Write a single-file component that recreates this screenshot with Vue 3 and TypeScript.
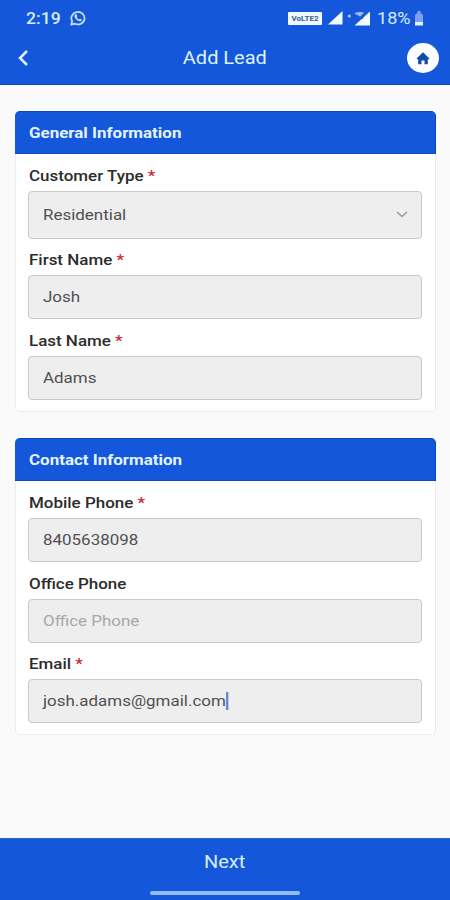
<script setup lang="ts">
interface Field {
  label: string
  value: string
  required?: boolean
  kind?: 'select' | 'focused' | 'empty'
}
interface Section {
  id: string
  title: string
  fields: Field[]
}

const sections: Section[] = [
  {
    id: 'general',
    title: 'General Information',
    fields: [
      { label: 'Customer Type', value: 'Residential', required: true, kind: 'select' },
      { label: 'First Name', value: 'Josh', required: true },
      { label: 'Last Name', value: 'Adams', required: true },
    ],
  },
  {
    id: 'contact',
    title: 'Contact Information',
    fields: [
      { label: 'Mobile Phone', value: '8405638098', required: true },
      { label: 'Office Phone', value: 'Office Phone', kind: 'empty' },
      { label: 'Email', value: 'josh.adams@gmail.com', required: true, kind: 'focused' },
    ],
  },
]
</script>

<template>
  <div class="screen">
    <header class="top">
      <div class="status">
        <span class="clock wide">2:19</span>
        <svg class="whatsapp" viewBox="0 0 18 16" preserveAspectRatio="none">
          <path d="M2.2 14.6 3.2 11.2A6.6 6.2 0 1 1 6 13.7Z" fill="none" stroke="#c4e3ff" stroke-width="1.7" stroke-linejoin="round" />
          <path d="M6.6 4.2 7.7 4.5 8.3 6.3 7.6 7.1C8.2 8.3 9 9 10.1 9.5L11 8.7 12.8 9.6C12.8 11 11.6 11.6 10.5 11.3 8 10.7 6 8.7 5.5 6.5 5.4 5.4 5.8 4.5 6.6 4.2Z" fill="#c4e3ff" />
        </svg>
        <span class="grow"></span>
        <span class="volte"><span>VoLTE2</span></span>
        <svg class="signal" viewBox="0 0 15 14"><path d="M14.5 0V13.5H0Z" fill="#f2fbff" /></svg>
        <svg class="signal2" viewBox="0 0 24 15">
          <circle cx="2.3" cy="5" r="1.6" fill="#a9caff" />
          <path d="M23 .5V14.5H7.5Z" fill="#f2fbff" />
          <path d="M7.5 2.3Q12 0 17 1.5L12.5 6.5Z" fill="#9fbeee" />
          <path d="M9 4 16 7.5" stroke="#1557db" stroke-width="1.3" />
        </svg>
        <span class="battery-text wide">18%</span>
        <svg class="battery" viewBox="0 0 10 15">
          <path d="M3.4 0H6.6V1.7L9 4V11H1V4L3.4 1.7Z" fill="#7f9ff4" />
          <path d="M1 11H9V14.5H1Z" fill="#e7f2ff" />
        </svg>
      </div>
      <div class="nav">
        <button class="back" aria-label="Back">
          <svg viewBox="0 0 12 18"><path d="M10 2 3 9 10 16" fill="none" stroke="#dff3ff" stroke-width="2.5" /></svg>
        </button>
        <h1><span class="wide">Add Lead</span></h1>
        <button class="home" aria-label="Home">
          <svg viewBox="0 0 14 13"><path d="M7 .3 13.4 6.6 12.8 7.2H11.8V12.2H8.5V8.6H5.5V12.2H2.2V7.2H1.2L.6 6.6Z" fill="#124aa9" /></svg>
        </button>
      </div>
    </header>

    <main>
      <section v-for="s in sections" :key="s.id" class="card" :class="s.id">
        <h2><span class="wide">{{ s.title }}</span></h2>
        <div class="fields">
          <div v-for="f in s.fields" :key="f.label" class="field">
            <div class="label"><span class="wide">{{ f.label }}<i v-if="f.required"> *</i></span></div>
            <div class="box" :class="f.kind">
              <span class="wide">{{ f.value }}<b v-if="f.kind === 'focused'" class="caret"></b></span>
              <svg v-if="f.kind === 'select'" class="chevron" viewBox="0 0 12 7"><path d="M1 1 6 5.5 11 1" fill="none" stroke="#9a9a9a" stroke-width="1.5" /></svg>
            </div>
          </div>
        </div>
      </section>
    </main>

    <footer>
      <span class="next wide">Next</span>
      <span class="handle"></span>
    </footer>
  </div>
</template>

<style>
body {
  margin: 0;
}
</style>

<style scoped>
.screen {
  box-sizing: border-box;
  width: 450px;
  height: 900px;
  display: flex;
  flex-direction: column;
  overflow: hidden;
  background: #fafafa;
  font-family: Roboto, 'Liberation Sans', sans-serif;
  font-size: 15px;
  color: #505050;
}
.wide {
  display: inline-block;
  transform: scaleX(1.13);
  transform-origin: left center;
  white-space: pre;
}
button {
  border: 0;
  padding: 0;
  background: none;
}
svg {
  display: block;
  flex: none;
}
.top {
  box-sizing: border-box;
  height: 85px;
  flex: none;
  background: #1557db;
  border-bottom: 1px solid #0b43bd;
}
.status {
  display: flex;
  align-items: center;
  height: 36px;
  padding: 0 26px;
  color: #d5edff;
}
.clock {
  width: 43px;
  font-size: 16px;
  font-weight: 500;
  transform: scaleX(1.1);
}
.whatsapp {
  width: 18px;
  height: 16px;
}
.grow {
  flex: 1;
}
.volte {
  display: flex;
  align-items: center;
  justify-content: center;
  width: 34px;
  height: 13px;
  margin-right: 6px;
  border-radius: 1px;
  background: #eefaff;
  color: #37608f;
  font-size: 8px;
  font-weight: 700;
}
.signal {
  width: 15px;
  height: 14px;
  margin-right: 4px;
}
.signal2 {
  width: 24px;
  height: 15px;
  margin-right: 6px;
}
.battery-text {
  width: 37px;
  font-size: 16px;
}
.battery {
  width: 10px;
  height: 15px;
}
.nav {
  display: grid;
  grid-template-columns: 36px 1fr 36px;
  align-items: center;
  height: 44px;
  padding: 0 9px;
}
.back {
  padding-left: 8px;
}
.back svg {
  width: 12px;
  height: 18px;
}
h1 {
  margin: 0;
  text-align: center;
  font-size: 18px;
  font-weight: 400;
  line-height: 22px;
  color: #dcf3ff;
}
h1 .wide,
.next {
  transform: scaleX(1.11);
  transform-origin: center;
}
.home {
  justify-self: end;
  margin-right: 2px;
  display: flex;
  align-items: center;
  justify-content: center;
  width: 32px;
  height: 30px;
  border-radius: 50%;
  background: #fcfeff;
}
.home svg {
  width: 14px;
  height: 13px;
}
main {
  flex: 1;
  display: flex;
  flex-direction: column;
  gap: 26px;
  padding: 26px 14px 0 15px;
}
.card {
  box-sizing: border-box;
  border: 1px solid #ececec;
  border-top: 0;
  border-radius: 5px;
  background: #fff;
}
.general {
  height: 301px;
}
.contact {
  height: 297px;
}
h2 {
  box-sizing: border-box;
  height: 43px;
  margin: 0 -1px;
  padding-left: 14px;
  border: 1px solid #0d48c4;
  border-left: 0;
  border-radius: 5px 5px 0 0;
  background: #1557db;
  color: #e3f5ff;
  font-size: 15px;
  font-weight: 700;
  line-height: 42px;
}
.fields {
  padding: 10px 13px 0 12px;
}
.label {
  height: 27px;
  padding-left: 1px;
  line-height: 25px;
  font-size: 15px;
  font-weight: 500;
  color: #2c2c2c;
}
.label i {
  font-style: normal;
  color: #c52737;
}
.field + .field {
  margin-top: 9.5px;
}
.box {
  box-sizing: border-box;
  display: flex;
  align-items: center;
  justify-content: space-between;
  height: 44px;
  padding: 0 13px 0 14px;
  border: 1px solid #c9c9c9;
  border-radius: 4px;
  background: #eee;
}
.box.select {
  height: 47.5px;
}
.box.empty {
  color: #a8a8a8;
}
.chevron {
  width: 12px;
  height: 7px;
}
.caret {
  display: inline-block;
  width: 2px;
  height: 18px;
  background: #6187d4;
  vertical-align: -4px;
}
footer {
  box-sizing: border-box;
  display: flex;
  flex-direction: column;
  align-items: center;
  height: 62px;
  border-top: 1px solid #2f63bb;
  background: #1557db;
  color: #d5efff;
}
.next {
  height: 52px;
  line-height: 46px;
  font-size: 18px;
}
.handle {
  width: 150px;
  height: 4px;
  border-radius: 2px;
  background: #91bef7;
}
</style>
